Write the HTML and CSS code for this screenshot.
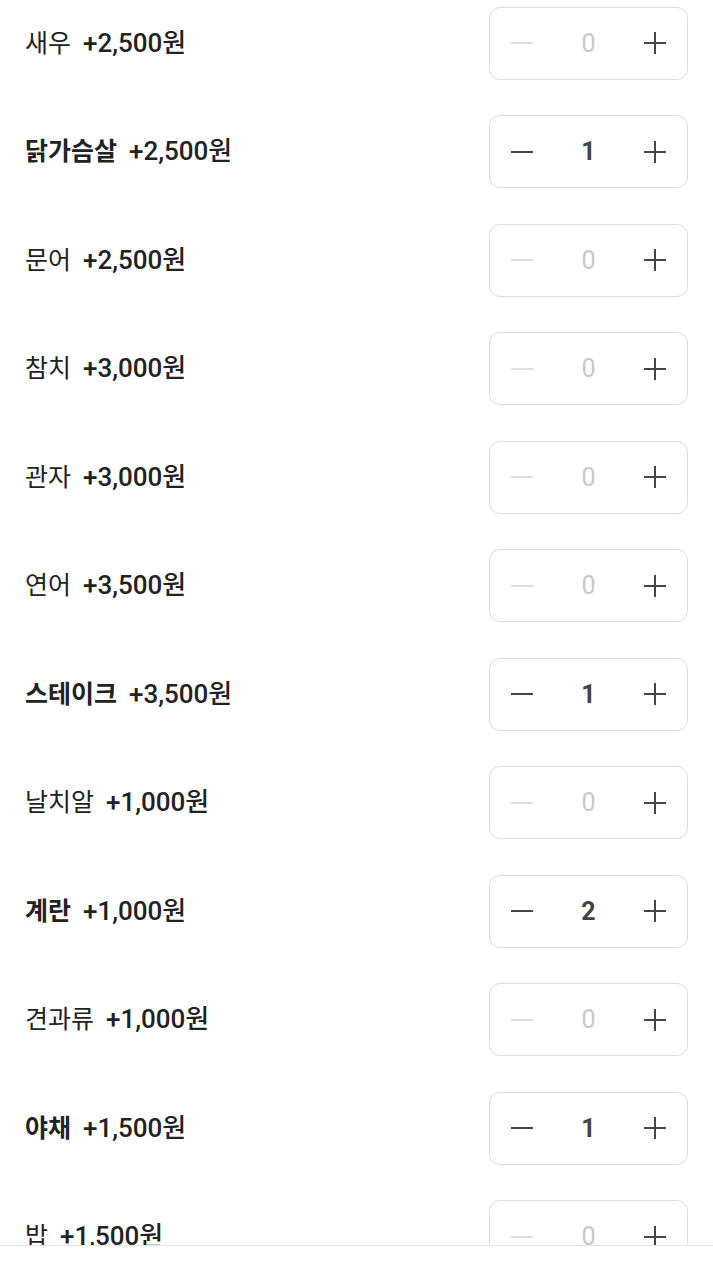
FILE: index.html
```html
<!DOCTYPE html>
<html lang="ko">
<head>
    <meta charset="UTF-8">
    <meta name="viewport" content="width=device-width, initial-scale=1.0">
    <title>토핑 추가</title>
    <link rel="stylesheet" href="styles.css">
</head>
<body>
    <ul class="options" id="options"></ul>
    <div class="bottom-bar"></div>

    <script>
        const toppings = [
            ['새우', '+2,500원', 0],
            ['닭가슴살', '+2,500원', 1],
            ['문어', '+2,500원', 0],
            ['참치', '+3,000원', 0],
            ['관자', '+3,000원', 0],
            ['연어', '+3,500원', 0],
            ['스테이크', '+3,500원', 1],
            ['날치알', '+1,000원', 0],
            ['계란', '+1,000원', 2],
            ['견과류', '+1,000원', 0],
            ['야채', '+1,500원', 1],
            ['밥', '+1,500원', 0]
        ];

        const minusIcon = '<svg width="22" height="22" viewBox="0 0 22 22"><path d="M0 11h22" stroke="currentColor" stroke-width="2"/></svg>';
        const plusIcon = '<svg width="22" height="22" viewBox="0 0 22 22"><path d="M0 11h22M11 0v22" stroke="currentColor" stroke-width="2"/></svg>';

        document.getElementById('options').innerHTML = toppings.map(function (t) {
            const on = t[2] > 0 ? ' selected' : '';
            return `
                <li class="option${on}">
                    <div class="label">
                        <span class="name">${t[0]}</span>
                        <span class="price">${t[1]}</span>
                    </div>
                    <div class="stepper">
                        <button class="minus">${minusIcon}</button>
                        <span class="count">${t[2]}</span>
                        <button class="plus">${plusIcon}</button>
                    </div>
                </li>`;
        }).join('');
    </script>
</body>
</html>
```

FILE: styles.css
```css
body {
    font-family: Roboto, "Noto Sans CJK KR", sans-serif;
    background-color: #fff;
    color: #222;
    margin: 0;
}

.options {
    list-style: none;
    margin: 0;
    padding: 0 25px 0 25px;
}

.option {
    display: flex;
    align-items: center;
    height: 108.5px;
}

.option:first-child {
    margin-top: -11px;
}

.label {
    display: flex;
    align-items: baseline;
    padding-bottom: 6px;
}

.name {
    font-size: 25px;
    font-weight: 400;
}

.selected .name {
    font-weight: 700;
}

.price {
    font-size: 26px;
    font-weight: 500;
    margin-left: 12px;
}

.stepper {
    margin-left: auto;
    width: 199px;
    height: 73px;
    box-sizing: border-box;
    border: 1px solid #dcdcdc;
    border-radius: 11px;
    display: flex;
    align-items: center;
    justify-content: space-between;
    padding: 0 21px;
}

.stepper button {
    background: none;
    border: none;
    padding: 0;
    width: 22px;
    height: 22px;
    color: #444;
    display: flex;
}

.stepper .minus {
    color: #dedede;
}

.selected .stepper .minus {
    color: #444;
}

.count {
    font-size: 25px;
    color: #c8c8c8;
}

.selected .count {
    color: #444;
    font-weight: 700;
}

.bottom-bar {
    position: fixed;
    left: 0;
    right: 0;
    bottom: 0;
    height: 18px;
    background: #fff;
    border-top: 1px solid #e3e3e3;
}
```
